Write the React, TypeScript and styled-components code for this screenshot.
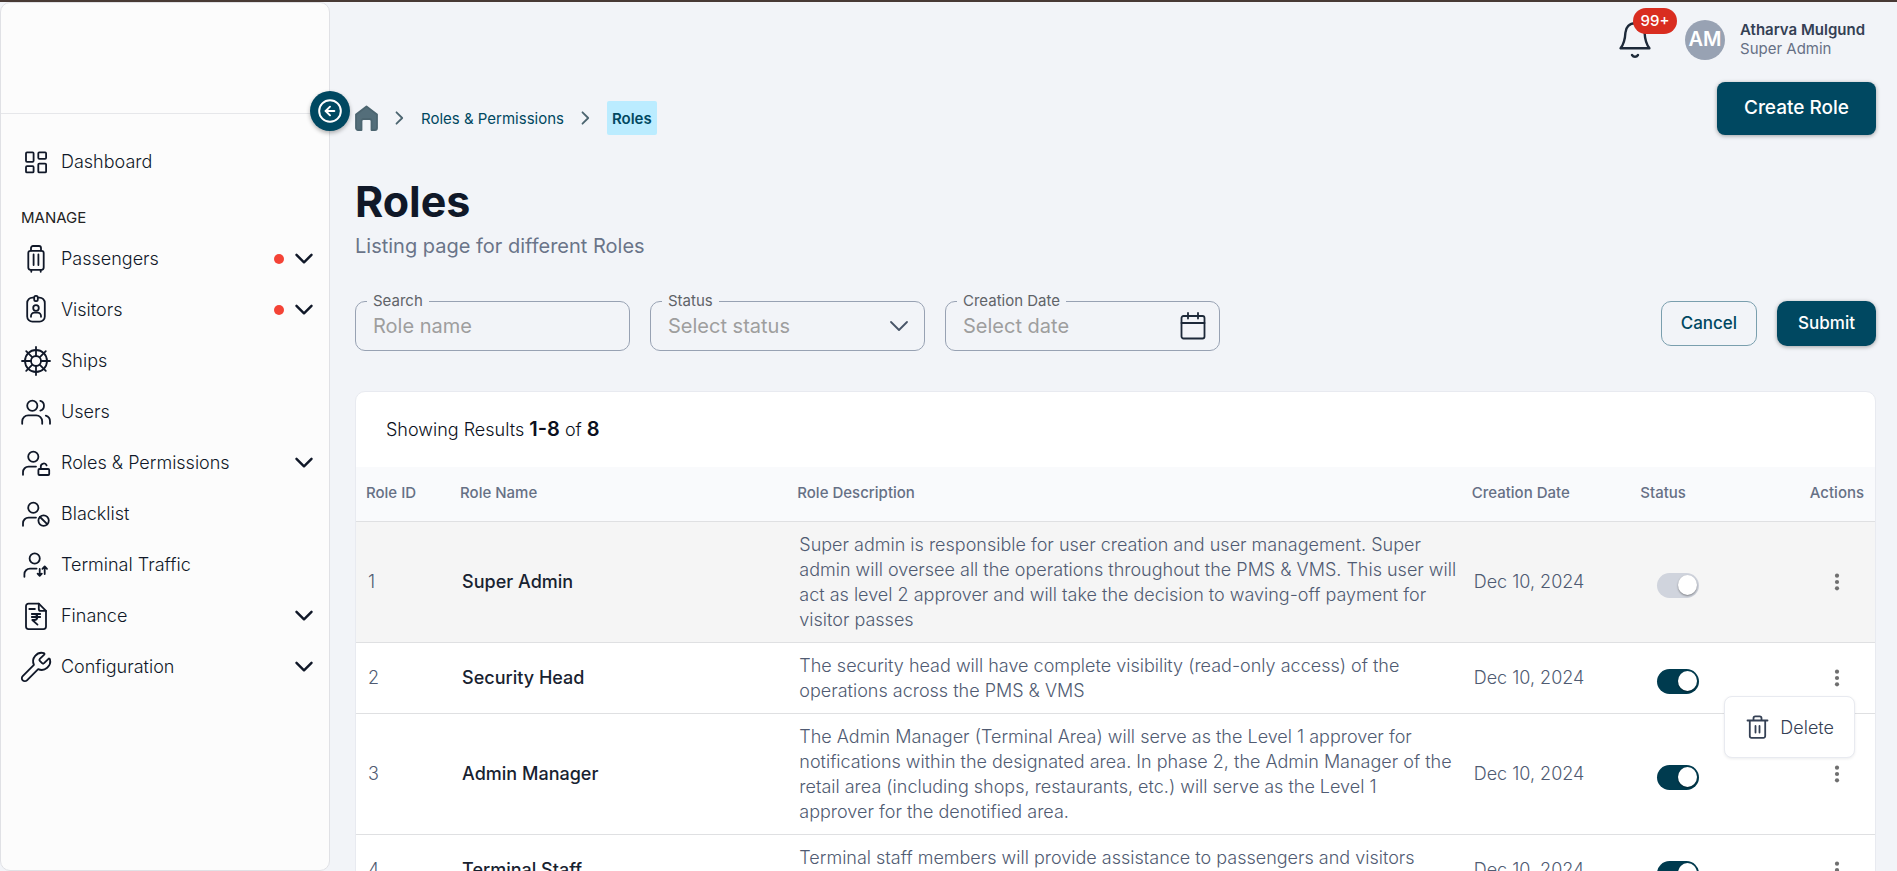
import React, { useState } from 'react';
import styled, { createGlobalStyle } from 'styled-components';
import { CircleArrowLeft, Wrench } from 'lucide-react';

const GlobalStyle = createGlobalStyle`
  *, *::before, *::after { box-sizing: border-box; }
  body {
    margin: 0;
    background: #f2f4f8;
    color: #101828;
    font-family: Inter, "Liberation Sans", sans-serif;
  }
  button, input, select { font: inherit; color: inherit; }
`;

const Shell = styled.div`
  display: flex;
  height: 100vh;
  border-top: 2px solid #483a35;
  overflow: hidden;
`;

/* Sidebar */

const Sidebar = styled.aside`
  position: relative;
  flex: 0 0 330px;
  border: 1px solid #e0e1e5;
  border-radius: 10px;
  background: #fcfcfc;
`;

const Brand = styled.div`
  height: 111px;
  border-bottom: 1px solid #e6e7ea;
`;

const CollapseButton = styled.button`
  position: absolute;
  top: 88px;
  right: -21px;
  z-index: 3;
  display: flex;
  align-items: center;
  justify-content: center;
  width: 40px;
  height: 40px;
  padding: 0;
  border: 0;
  border-radius: 50%;
  background: #004861;
  color: #fff;
  box-shadow: 0 2px 4px rgba(0, 0, 0, 0.3);
  cursor: pointer;
`;

const NavList = styled.ul`
  margin: 0;
  padding: 0;
  list-style: none;
`;

const Nav = styled.nav`
  padding-top: 22px;
`;

const NavLink = styled.a`
  display: flex;
  align-items: center;
  gap: 10px;
  height: 51px;
  padding: 0 16px 0 20px;
  color: #101828;
  font-size: 18px;
  font-weight: 300;
  line-height: 24px;
  text-decoration: none;
`;

const NavText = styled.span`
  flex: 1;
`;

const AlertDot = styled.span`
  width: 10px;
  height: 10px;
  margin-right: 1px;
  border-radius: 50%;
  background: #f44336;
`;

const SectionLabel = styled.h2`
  margin: 0;
  padding: 16px 20px 0;
  color: #222;
  font-size: 15px;
  font-weight: 400;
  line-height: 30px;
`;

/* Main area */

const Main = styled.main`
  flex: 1;
  min-width: 0;
  padding: 0 21px 0 25px;
  overflow-y: auto;
  scrollbar-width: none;
`;

const TopBar = styled.header`
  display: flex;
  align-items: center;
  justify-content: flex-end;
  height: 76px;
  padding-right: 11px;
`;

const BellButton = styled.button`
  position: relative;
  display: flex;
  width: 32px;
  height: 40px;
  margin-right: 34px;
  padding: 0;
  border: 0;
  background: none;
  cursor: pointer;
`;

const CountBadge = styled.span`
  position: absolute;
  top: -12px;
  left: 14px;
  width: 44px;
  border-radius: 13px;
  background: #d92d20;
  color: #fff;
  font-size: 15px;
  font-weight: 500;
  line-height: 26px;
  text-align: center;
`;

const Avatar = styled.span`
  width: 40px;
  height: 40px;
  margin-right: 15px;
  border-radius: 50%;
  background: #98a2b3;
  color: #fff;
  font-size: 20px;
  font-weight: 600;
  line-height: 38px;
  text-align: center;
`;

const UserName = styled.div`
  color: #344054;
  font-size: 15px;
  font-weight: 600;
  line-height: 19px;
`;

const UserRole = styled.div`
  padding-bottom: 2px;
  color: #667085;
  font-size: 15px;
  line-height: 19px;
`;

const PageHead = styled.div`
  display: flex;
  align-items: flex-end;
  justify-content: space-between;
  padding-top: 4px;
`;

const Crumbs = styled.ol`
  display: flex;
  align-items: center;
  gap: 17px;
  height: 34px;
  margin: 0;
  padding: 0;
  list-style: none;
  color: #004861;
  font-size: 15px;
  line-height: 32px;
  svg { display: block; }
  a { color: inherit; text-decoration: none; }
`;

const Crumb = styled.li<{ $current?: boolean }>`
  padding: ${p => (p.$current ? '2px 5px 0' : '2px 0 0')};
  border-radius: 2px;
  background: ${p => (p.$current ? '#bbecff' : 'none')};
  font-weight: ${p => (p.$current ? 600 : 400)};
`;

const Button = styled.button<{ $outline?: boolean; $large?: boolean }>`
  height: ${p => (p.$large ? 53 : 45)}px;
  padding: ${p => (p.$large ? '0 27px 3px' : p.$outline ? '0 19px 2px' : '0 21px 2px')};
  border: ${p => (p.$outline ? '1px solid #7a9fae' : '0')};
  border-radius: ${p => (p.$large ? 8 : 10)}px;
  background: ${p => (p.$outline ? 'transparent' : '#004861')};
  color: ${p => (p.$outline ? '#004861' : '#fff')};
  box-shadow: ${p => (p.$outline ? 'none' : '0 1px 4px rgba(0, 0, 0, 0.35)')};
  font-size: ${p => (p.$large ? 19 : 17)}px;
  font-weight: 500;
  white-space: nowrap;
  cursor: pointer;
`;

const Title = styled.h1`
  margin: 42px 0 0;
  font-size: 43px;
  font-weight: 700;
  line-height: 48px;
`;

const Subtitle = styled.p`
  margin: 7px 0 0;
  color: #6a7489;
  font-size: 20px;
  line-height: 28px;
`;

const Filters = styled.form`
  display: flex;
  align-items: flex-start;
  gap: 20px;
  margin-top: 31px;
`;

const Field = styled.fieldset`
  flex: 0 1 275px;
  min-width: 0;
  height: 60px;
  margin: 0;
  padding: 0 11px;
  border: 1px solid #98a2b3;
  border-radius: 10px;
  legend {
    padding: 0 6px;
    color: #5f6368;
    font-size: 15px;
    line-height: 20px;
  }
`;

const FieldBody = styled.div`
  display: flex;
  align-items: center;
  height: 29px;
  padding: 0 2px 0 6px;
  svg { display: block; }
`;

const fieldText = `
  flex: 1;
  min-width: 0;
  padding: 0;
  border: 0;
  outline: 0;
  appearance: none;
  background: none;
  font-size: 20px;
  line-height: 28px;
`;

const TextInput = styled.input`
  ${fieldText}
  &::placeholder { color: #9e9e9e; opacity: 1; }
`;

const SelectInput = styled.select`
  ${fieldText}
  color: #9e9e9e;
`;

const PlainButton = styled.button`
  display: block;
  margin: 0 auto;
  padding: 0;
  border: 0;
  background: none;
  cursor: pointer;
  svg { display: block; }
`;

const FilterActions = styled.div`
  display: flex;
  gap: 20px;
  margin: 10px 0 0 auto;
`;

/* Results table */

const Card = styled.section`
  margin-top: 40px;
  border: 1px solid #e8eaf0;
  border-radius: 10px;
  background: #fff;
`;

const ResultCount = styled.p`
  margin: 0;
  padding: 0 30px;
  color: #0b1020;
  font-size: 18px;
  font-weight: 300;
  line-height: 75px;
  b { font-size: 20px; font-weight: 600; }
`;

const Table = styled.table`
  width: 100%;
  table-layout: fixed;
  border-spacing: 0;
`;

const HeadCell = styled.th<{ $center?: boolean }>`
  height: 55px;
  padding: 0 10px 3px;
  border-bottom: 1px solid #dfe0e2;
  background: #f9fafc;
  color: #667085;
  font-size: 15px;
  font-weight: 500;
  text-align: ${p => (p.$center ? 'center' : 'left')};
  white-space: nowrap;
`;

const Row = styled.tr<{ $muted?: boolean }>`
  background: ${p => (p.$muted ? '#f5f5f5' : '#fff')};
`;

const Cell = styled.td<{ $strong?: boolean }>`
  padding: 9px 12px 11px;
  border-bottom: 1px solid #dfe0e2;
  color: ${p => (p.$strong ? '#182230' : '#505b72')};
  font-size: 18px;
  font-weight: ${p => (p.$strong ? 500 : 300)};
  line-height: 25px;
`;

const DescriptionCell = styled(Cell)`
  padding: 10px 0 10px 12px;
  white-space: pre-line;
`;

const StatusCell = styled(Cell)`
  padding: 0 27px;
`;

const ActionCell = styled(Cell)`
  position: relative;
  padding: 0;
`;

const Toggle = styled.input`
  display: block;
  appearance: none;
  width: 42px;
  height: 25px;
  margin: 6px 0 0;
  padding: 2px;
  border-radius: 13px;
  background: #d0d4dd;
  cursor: pointer;
  &::before {
    content: '';
    display: block;
    width: 19px;
    height: 20px;
    border-radius: 50%;
    background: #fff;
    box-shadow: 0 1px 2px rgba(0, 0, 0, 0.4);
  }
  &:checked::before { margin-left: 19px; }
  &:checked:enabled { background: #003b4f; }
`;

const Menu = styled.div`
  position: absolute;
  top: 53px;
  right: 20px;
  z-index: 2;
  border: 1px solid #e8eaf0;
  border-radius: 8px;
  background: #fff;
  box-shadow: 0 1px 3px rgba(16, 24, 40, 0.08);
`;

const MenuItem = styled.button`
  display: flex;
  align-items: center;
  gap: 11px;
  height: 60px;
  padding: 0 20px 0 21px;
  border: 0;
  background: none;
  color: #344054;
  font-size: 18px;
  font-weight: 300;
  cursor: pointer;
`;

/* Icons */

const Icon = styled.svg`
  flex: none;
  fill: none;
  stroke: currentColor;
  stroke-width: 1.8;
  stroke-linecap: round;
  stroke-linejoin: round;
`;

const BoldIcon = styled(Icon)`
  stroke-width: 2.4;
`;

const NavIcon = ({ children }: { children: React.ReactNode }) => (
  <Icon width="30" height="30" viewBox="0 0 30 30" aria-hidden="true">{children}</Icon>
);

const person = (
  <>
    <circle cx="12.3" cy="8.7" r="5.1" />
    <path d="M2 26.8v-2.6a5.6 5.6 0 0 1 5.6-5.6H15" />
  </>
);

const icons = {
  dashboard: (
    <NavIcon>
      <rect x="5" y="5.4" width="7.6" height="9.4" rx="1" />
      <rect x="17.3" y="5.4" width="7.8" height="6.4" rx="1" />
      <rect x="5" y="19.2" width="7.6" height="6.2" rx="1" />
      <rect x="17.3" y="16.6" width="7.8" height="8.8" rx="1" />
    </NavIcon>
  ),
  luggage: (
    <NavIcon>
      <rect x="7.3" y="6.8" width="15.4" height="19" rx="2.2" />
      <path d="M10 6.5V4a2 2 0 0 1 2-2h6a2 2 0 0 1 2 2v2.5M12.6 10.5v10.5M17.4 10.5v10.5M10.3 26v1.8M19.7 26v1.8" />
    </NavIcon>
  ),
  badge: (
    <NavIcon>
      <path d="M13 2.6h-1.5a5.3 5.3 0 0 0-5.3 5.3v13.5a5.3 5.3 0 0 0 5.3 5.3h7a5.3 5.3 0 0 0 5.3-5.3V7.9a5.3 5.3 0 0 0-5.3-5.3H17" />
      <rect x="13.2" y="0.9" width="3.6" height="5.2" rx="1.6" />
      <circle cx="15" cy="13" r="2.8" />
      <path d="M10 21.8v-.8a3.4 3.4 0 0 1 3.4-3.4h3.2A3.4 3.4 0 0 1 20 21v.8" />
    </NavIcon>
  ),
  wheel: (
    <NavIcon>
      <circle cx="15" cy="15" r="11" />
      <circle cx="15" cy="15" r="5" />
      <path d="M15 1v9M15 20v9M1 15h9M20 15h9M5.2 5.2l6.2 6.2M18.6 18.6l6.2 6.2M24.8 5.2l-6.2 6.2M11.4 18.6l-6.2 6.2" />
    </NavIcon>
  ),
  users: (
    <NavIcon>
      <circle cx="11.3" cy="8.7" r="5.1" />
      <path d="M1.2 26.8v-2.4a6 6 0 0 1 6-6h8a6 6 0 0 1 6 6v2.4M19.3 3.8a5.1 5.1 0 0 1 0 9.8M24.8 18.6a6 6 0 0 1 4.2 5.8v2.4" />
    </NavIcon>
  ),
  userLock: (
    <NavIcon>
      {person}
      <rect x="17.4" y="21" width="10.8" height="6" rx="1" />
      <path d="M19.8 21v-2.6a3 3 0 0 1 5.8-1" />
    </NavIcon>
  ),
  userBan: (
    <NavIcon>
      {person}
      <circle cx="22.6" cy="21.6" r="5.2" />
      <path d="M19 18l7.2 7.2" />
    </NavIcon>
  ),
  userTraffic: (
    <NavIcon>
      <circle cx="13.7" cy="8.5" r="5.1" />
      <path d="M3.4 26.8v-2.6a5.6 5.6 0 0 1 5.6-5.6h6.600M18.700 19v6.600M16.600 23.600l2.100 2.300 2.100-2.300M23.700 24v-7M21.400 18.800l2.300-2.400 2.300 2.400" />
    </NavIcon>
  ),
  finance: (
    <NavIcon>
      <path d="M17.800 2.700H7.500a2.500 2.500 0 0 0-2.500 2.500v20.400a2.500 2.500 0 0 0 2.500 2.500h15a2.500 2.500 0 0 0 2.500-2.500V9.900z" />
      <path d="M17.800 2.700v5.200a2 2 0 0 0 2 2H25M8.300 8h5.600" />
      <path d="M10.800 13h8.400M10.800 16h8.400M10.800 13h2.500a3 3 0 0 1 0 6h-2l5.200 4.600" />
    </NavIcon>
  ),
};

const WrenchBox = styled.span`
  display: flex;
  align-items: center;
  justify-content: center;
  flex: none;
  width: 30px;
  svg { flex: none; }
`;

const NavChevron = () => (
  <BoldIcon width="18" height="12" viewBox="0 0 18 12" aria-hidden="true">
    <path d="M1.5 1.8 9 9.3l7.5-7.5" />
  </BoldIcon>
);

const CrumbChevron = () => (
  <Icon width="9" height="14" viewBox="0 0 9 14" color="#4c6570" aria-hidden="true">
    <path d="M1.5 1.3 7.2 7l-5.7 5.700" />
  </Icon>
);

const navItems = [
  { label: 'Passengers', icon: icons.luggage, alert: true, expandable: true },
  { label: 'Visitors', icon: icons.badge, alert: true, expandable: true },
  { label: 'Ships', icon: icons.wheel },
  { label: 'Users', icon: icons.users },
  { label: 'Roles & Permissions', icon: icons.userLock, expandable: true },
  { label: 'Blacklist', icon: icons.userBan },
  { label: 'Terminal Traffic', icon: icons.userTraffic },
  { label: 'Finance', icon: icons.finance, expandable: true },
  {
    label: 'Configuration',
    icon: <WrenchBox><Wrench size={34} strokeWidth={1.3} /></WrenchBox>,
    expandable: true,
  },
];

const roles = [
  {
    id: 1,
    name: 'Super Admin',
    text: `Super admin is responsible for user creation and user management. Super
      admin will oversee all the operations throughout the PMS & VMS. This user will
      act as level 2 approver and will take the decision to waving-off payment for
      visitor passes`,
    locked: true,
  },
  {
    id: 2,
    name: 'Security Head',
    text: `The security head will have complete visibility (read-only access) of the
      operations across the PMS & VMS`,
  },
  {
    id: 3,
    name: 'Admin Manager',
    text: `The Admin Manager (Terminal Area) will serve as the Level 1 approver for
      notifications within the designated area. In phase 2, the Admin Manager of the
      retail area (including shops, restaurants, etc.) will serve as the Level 1
      approver for the denotified area.`,
  },
  {
    id: 4,
    name: 'Terminal Staff',
    text: `Terminal staff members will provide assistance to passengers and visitors
      throughout the terminal area`,
  },
];

export default function App() {
  const [openMenu, setOpenMenu] = useState<number | null>(2);

  return (
    <>
      <GlobalStyle />
      <Shell>
        <Sidebar>
          <Brand />
          <CollapseButton aria-label="Collapse sidebar">
            <CircleArrowLeft size={26} strokeWidth={1.8} />
          </CollapseButton>
          <Nav>
            <NavLink href="#dashboard">{icons.dashboard}<NavText>Dashboard</NavText></NavLink>
            <SectionLabel>MANAGE</SectionLabel>
            <NavList>
              {navItems.map(item => (
                <li key={item.label}>
                  <NavLink href="#">
                    {item.icon}
                    <NavText>{item.label}</NavText>
                    {item.alert && <AlertDot />}
                    {item.expandable && <NavChevron />}
                  </NavLink>
                </li>
              ))}
            </NavList>
          </Nav>
        </Sidebar>

        <Main>
          <TopBar>
            <BellButton aria-label="Notifications">
              <BoldIcon width="32" height="40" viewBox="0 0 32 40" color="#1d2939">
                <path d="M16 3.2c-5.5 0-9.3 4-9.6 9.5-.3 6-1 10.5-4.8 15.6h28.800c-3.800-5.100-4.500-9.600-4.800-15.600-.3-5.500-4.100-9.500-9.600-9.500z" />
                <path d="M13 35c1.500 2.300 4.500 2.300 6 0" />
              </BoldIcon>
              <CountBadge>99+</CountBadge>
            </BellButton>
            <Avatar>AM</Avatar>
            <div>
              <UserName>Atharva Mulgund</UserName>
              <UserRole>Super Admin</UserRole>
            </div>
          </TopBar>

          <PageHead>
            <nav aria-label="Breadcrumb">
              <Crumbs>
                <li>
                  <a href="#home" aria-label="Home">
                    <Icon width="23" height="26" viewBox="0 0 23 26">
                      <path d="M1 9.500 11.500 1.500 22 9.500V23a2 2 0 0 1-2 2h-3.500V16a2 2 0 0 0-2-2h-6a2 2 0 0 0-2 2v9H3a2 2 0 0 1-2-2z" fill="#546e7a" stroke="#4c6570" />
                    </Icon>
                  </a>
                </li>
                <li aria-hidden="true"><CrumbChevron /></li>
                <Crumb><a href="#permissions">Roles &amp; Permissions</a></Crumb>
                <li aria-hidden="true"><CrumbChevron /></li>
                <Crumb $current aria-current="page">Roles</Crumb>
              </Crumbs>
            </nav>
            <Button $large>Create Role</Button>
          </PageHead>

          <Title>Roles</Title>
          <Subtitle>Listing page for different Roles</Subtitle>

          <Filters onSubmit={e => e.preventDefault()}>
            <Field>
              <legend><label htmlFor="search">Search</label></legend>
              <FieldBody>
                <TextInput id="search" placeholder="Role name" />
              </FieldBody>
            </Field>
            <Field>
              <legend><label htmlFor="status">Status</label></legend>
              <FieldBody>
                <SelectInput id="status" defaultValue="">
                  <option value="">Select status</option>
                  <option>Active</option>
                  <option>Inactive</option>
                </SelectInput>
                <Icon width="24" height="24" viewBox="0 0 24 24" color="#475467" aria-hidden="true">
                  <path d="m4 8 8 8 8-8" />
                </Icon>
              </FieldBody>
            </Field>
            <Field>
              <legend><label htmlFor="created">Creation Date</label></legend>
              <FieldBody>
                <TextInput id="created" placeholder="Select date" />
                <PlainButton type="button" aria-label="Open calendar">
                  <Icon width="26" height="28" viewBox="0 0 26 28" color="#1d2939">
                    <rect x="1.5" y="4" width="23" height="22.5" rx="2" />
                    <path d="M1.5 11h23M8 1v5.5M18 1v5.5" />
                  </Icon>
                </PlainButton>
              </FieldBody>
            </Field>
            <FilterActions>
              <Button type="reset" $outline>Cancel</Button>
              <Button type="submit">Submit</Button>
            </FilterActions>
          </Filters>

          <Card>
            <ResultCount>Showing Results <b>1-8</b> of <b>8</b></ResultCount>
            <Table>
              <colgroup>
                <col width="94" />
                <col width="22.2%" />
                <col width="44.4%" />
                <col width="11.1%" />
                <col width="11.1%" />
                <col width="76" />
              </colgroup>
              <thead>
                <tr>
                  <HeadCell>Role ID</HeadCell>
                  <HeadCell>Role Name</HeadCell>
                  <HeadCell>Role Description</HeadCell>
                  <HeadCell>Creation Date</HeadCell>
                  <HeadCell>Status</HeadCell>
                  <HeadCell $center>Actions</HeadCell>
                </tr>
              </thead>
              <tbody>
                {roles.map(role => (
                  <Row key={role.id} $muted={role.locked}>
                    <Cell>{role.id}</Cell>
                    <Cell $strong>{role.name}</Cell>
                    <DescriptionCell>{role.text}</DescriptionCell>
                    <Cell>Dec 10, 2024</Cell>
                    <StatusCell>
                      <Toggle
                        type="checkbox"
                        role="switch"
                        defaultChecked
                        disabled={role.locked}
                        aria-label={`${role.name} status`}
                      />
                    </StatusCell>
                    <ActionCell>
                      <PlainButton
                        aria-label={`Actions for ${role.name}`}
                        onClick={() => setOpenMenu(openMenu === role.id ? null : role.id)}
                      >
                        <svg width="24" height="24" viewBox="0 0 24 24" fill="#6f6f6f">
                          <circle cx="12" cy="5.7" r="2.1" />
                          <circle cx="12" cy="12" r="2.1" />
                          <circle cx="12" cy="18.3" r="2.1" />
                        </svg>
                      </PlainButton>
                      {openMenu === role.id && (
                        <Menu>
                          <MenuItem>
                            <Icon width="23" height="24" viewBox="0 0 23 24" color="#344054">
                              <path d="M1.500 5.500h20M3.800 5.500v15.500a1.800 1.800 0 0 0 1.800 1.800h11.800a1.800 1.800 0 0 0 1.800-1.800V5.500M7.500 5V3.200a1.800 1.800 0 0 1 1.800-1.800h4.400a1.800 1.800 0 0 1 1.800 1.800V5M9.500 11v6.500M13.500 11v6.500" />
                            </Icon>
                            Delete
                          </MenuItem>
                        </Menu>
                      )}
                    </ActionCell>
                  </Row>
                ))}
              </tbody>
            </Table>
          </Card>
        </Main>
      </Shell>
    </>
  );
}
